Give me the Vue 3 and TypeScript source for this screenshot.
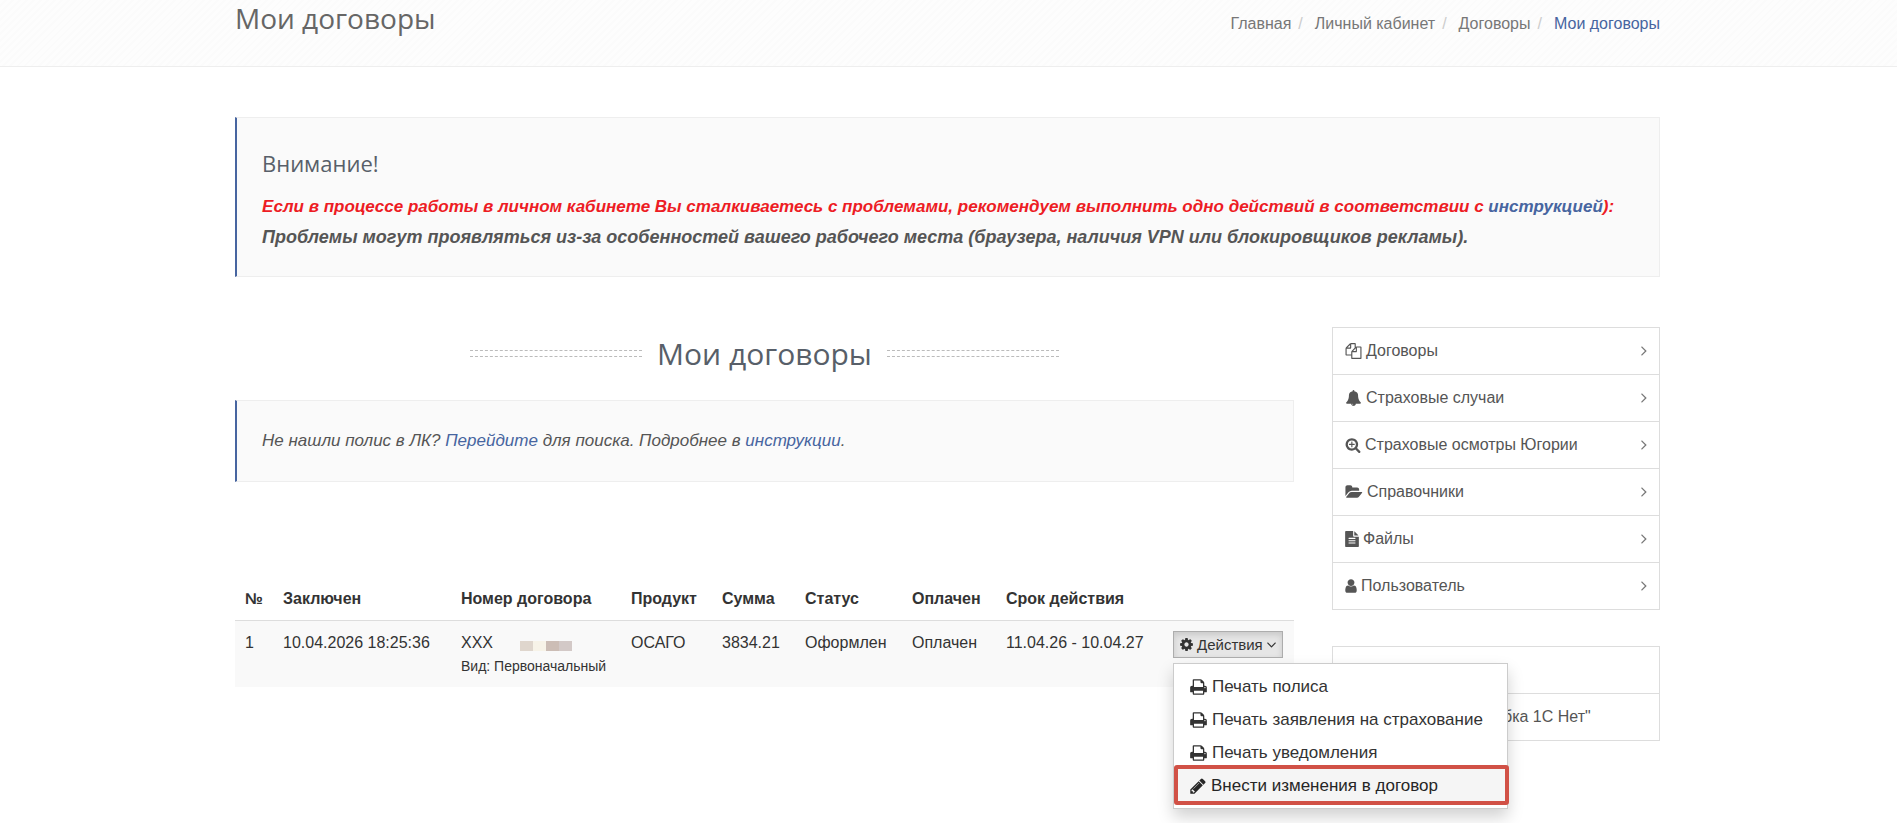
<script setup lang="ts">
import { ref } from 'vue'

interface Icon {
  box: string
  width: number
  path: string
}

const icons: Record<string, Icon> = {
  files: {
    box: '0 0 1792 1792',
    width: 17,
    path: 'M1696 384q40 0 68 28t28 68v1216q0 40-28 68t-68 28h-960q-40 0-68-28t-28-68v-288h-544q-40 0-68-28t-28-68v-672q0-40 20-88t48-76l408-408q28-28 76-48t88-20h416q40 0 68 28t28 68v328q68-40 128-40h416zm-544 213l-299 299h299v-299zm-640-384l-299 299h299v-299zm196 647l316-316v-416h-384v416q0 40-28 68t-68 28h-416v640h512v-256q0-40 20-88t48-76zm956 804v-1152h-384v416q0 40-28 68t-68 28h-416v640h896z',
  },
  bell: {
    box: '0 0 1792 1792',
    width: 17,
    path: 'M912 1696q0-16-16-16-59 0-101.5-42.5t-42.5-101.5q0-16-16-16t-16 16q0 73 51.5 124.5t124.5 51.5q16 0 16-16zm816-288q0 52-38 90t-90 38h-448q0 106-75 181t-181 75-181-75-75-181h-448q-52 0-90-38t-38-90q50-42 91-88t85-119.5 74.5-158.5 50-206 19.5-260q0-152 117-282.5t307-158.5q-8-19-8-39 0-40 28-68t68-28 68 28 28 68q0 20-8 39 190 28 307 158.5t117 282.5q0 139 19.5 260t50 206 74.5 158.5 85 119.5 91 88z',
  },
  searchPlus: {
    box: '64 0 1664 1792',
    width: 16,
    path: 'M1088 800v64q0 13-9.5 22.5t-22.5 9.5h-224v224q0 13-9.5 22.5t-22.5 9.5h-64q-13 0-22.5-9.5t-9.5-22.5v-224h-224q-13 0-22.5-9.5t-9.5-22.5v-64q0-13 9.5-22.5t22.5-9.5h224v-224q0-13 9.5-22.5t22.5-9.5h64q13 0 22.5 9.5t9.5 22.5v224h224q13 0 22.5 9.5t9.5 22.5zm128 32q0-185-131.5-316.5t-316.5-131.5-316.5 131.5-131.5 316.5 131.5 316.5 316.5 131.5 316.5-131.5 131.5-316.5zm512 832q0 53-37.5 90.5t-90.5 37.5q-54 0-90-38l-343-342q-179 124-399 124-143 0-273.5-55.5t-225-150-150-225-55.5-273.5 55.5-273.5 150-225 225-150 273.5-55.5 273.5 55.5 225 150 150 225 55.5 273.5q0 220-124 399l343 343q37 37 37 90z',
  },
  folder: {
    box: '0 0 1920 1792',
    width: 18,
    path: 'M1879 952q0 31-31 66l-336 396q-43 51-120.5 86.5t-143.5 35.5h-1088q-34 0-60.5-13t-26.5-43q0-31 31-66l336-396q43-51 120.5-86.5t143.5-35.5h1088q34 0 60.5 13t26.5 43zm-343-344v160h-832q-94 0-197 47.5t-164 119.5l-337 396-5 6q0-4-.5-12.5t-.5-12.5v-960q0-92 66-158t158-66h320q92 0 158 66t66 158v32h544q92 0 158 66t66 158z',
  },
  fileText: {
    box: '128 0 1536 1792',
    width: 14,
    path: 'M1596 476q14 14 28 36h-472v-472q22 14 36 28zm-476 164h544v1056q0 40-28 68t-68 28h-1344q-40 0-68-28t-28-68v-1600q0-40 28-68t68-28h800v544q0 40 28 68t68 28zm160 736v-64q0-14-9-23t-23-9h-704q-14 0-23 9t-9 23v64q0 14 9 23t23 9h704q14 0 23-9t9-23zm0-256v-64q0-14-9-23t-23-9h-704q-14 0-23 9t-9 23v64q0 14 9 23t23 9h704q14 0 23-9t9-23zm0-256v-64q0-14-9-23t-23-9h-704q-14 0-23 9t-9 23v64q0 14 9 23t23 9h704q14 0 23-9t9-23z',
  },
  user: {
    box: '256 0 1280 1792',
    width: 12,
    path: 'M1536 1399q0 109-62.5 187t-150.5 78h-854q-88 0-150.5-78t-62.5-187q0-85 8.5-160.5t31.5-152 58.5-131 94-89 134.5-34.5q131 128 313 128t313-128q76 0 134.5 34.5t94 89 58.5 131 31.5 152 8.5 160.5zm-256-887q0 159-112.5 271.5t-271.5 112.5-271.5-112.5-112.5-271.5 112.5-271.5 271.5-112.5 271.5 112.5 112.5 271.5z',
  },
  print: {
    box: '64 0 1664 1792',
    width: 17,
    path: 'M448 1536h896v-256h-896v256zm0-640h896v-384h-160q-40 0-68-28t-28-68v-160h-640v640zm1152 64q0-26-19-45t-45-19-45 19-19 45 19 45 45 19 45-19 19-45zm128 0v416q0 13-9.5 22.5t-22.5 9.5h-224v160q0 40-28 68t-68 28h-960q-40 0-68-28t-28-68v-160h-224q-13 0-22.5-9.5t-9.5-22.5v-416q0-79 56.5-135.5t135.5-56.5h64v-544q0-40 28-68t68-28h672q40 0 88 20t76 48l152 152q28 28 48 76t20 88v256h64q79 0 135.5 56.5t56.5 135.5z',
  },
  pencil: {
    box: '128 0 1536 1792',
    width: 16,
    path: 'M491 1536l91-91-235-235-91 91v107h128v128h107zm523-928q0-22-22-22-10 0-17 7l-542 542q-7 7-7 17 0 22 22 22 10 0 17-7l542-542q7-7 7-17zm-54-192l416 416-832 832h-416v-416zm683 96q0 53-37 90l-166 166-416-416 166-165q36-38 90-38 53 0 91 38l235 234q37 39 37 91z',
  },
}

const crumbs = ['Главная', 'Личный кабинет', 'Договоры', 'Мои договоры']

const sections = [
  { label: 'Договоры', icon: icons.files },
  { label: 'Страховые случаи', icon: icons.bell },
  { label: 'Страховые осмотры Югории', icon: icons.searchPlus },
  { label: 'Справочники', icon: icons.folder },
  { label: 'Файлы', icon: icons.fileText },
  { label: 'Пользователь', icon: icons.user },
]

const columns = ['№', 'Заключен', 'Номер договора', 'Продукт', 'Сумма', 'Статус', 'Оплачен', 'Срок действия', '']

const actions = [
  { label: 'Печать полиса', icon: icons.print, marked: false },
  { label: 'Печать заявления на страхование', icon: icons.print, marked: false },
  { label: 'Печать уведомления', icon: icons.print, marked: false },
  { label: 'Внести изменения в договор', icon: icons.pencil, marked: true },
]

const menuOpen = ref(true)
</script>

<template>
  <div class="page">
    <header class="topbar">
      <div class="container topbar-row">
        <h1>Мои договоры</h1>
        <nav aria-label="Навигация">
          <ol class="crumbs">
            <li v-for="(crumb, i) in crumbs" :key="i">
              <a href="#" :class="{ current: i === crumbs.length - 1 }">{{ crumb }}</a>
            </li>
          </ol>
        </nav>
      </div>
    </header>

    <div class="container">
      <section class="notice warning">
        <h2>Внимание!</h2>
        <p class="red">
          Если в процессе работы в личном кабинете Вы сталкиваетесь с проблемами, рекомендуем выполнить одно действий в соответствии с
          <a href="#">инструкцией</a>):
        </p>
        <p class="reason">Проблемы могут проявляться из-за особенностей вашего рабочего места (браузера, наличия VPN или блокировщиков рекламы).</p>
      </section>

      <div class="layout">
        <main>
          <div class="headline">
            <span class="rule"></span>
            <h2>Мои договоры</h2>
            <span class="rule"></span>
          </div>
          <section class="notice search">
            <p>Не нашли полис в ЛК? <a href="#">Перейдите</a> для поиска. Подробнее в <a href="#">инструкции</a>.</p>
          </section>

          <table>
            <thead>
              <tr>
                <th v-for="(column, i) in columns" :key="i" scope="col">{{ column }}</th>
              </tr>
            </thead>
            <tbody>
              <tr>
                <td>1</td>
                <td>10.04.2026 18:25:36</td>
                <td>
                  <div class="number">
                    XXX
                    <span class="masked"><i></i><i></i><i></i><i></i></span>
                  </div>
                  <div class="kind">Вид: Первоначальный</div>
                </td>
                <td>ОСАГО</td>
                <td>3834.21</td>
                <td>Оформлен</td>
                <td>Оплачен</td>
                <td>11.04.26 - 10.04.27</td>
                <td>
                  <div class="dropdown">
                    <button type="button" class="toggle" :aria-expanded="menuOpen" @click="menuOpen = !menuOpen">
                      <svg class="cog" viewBox="128 0 1536 1792" aria-hidden="true">
                        <path d="M1152 896q0-106-75-181t-181-75-181 75-75 181 75 181 181 75 181-75 75-181zm512-109v222q0 12-8 23t-20 13l-185 28q-19 54-39 91 35 50 107 138 10 12 10 25t-9 23q-27 37-99 108t-94 71q-12 0-26-9l-138-108q-44 23-91 38-16 136-29 186-7 28-36 28h-222q-14 0-24.5-8.5t-11.5-21.5l-28-184q-49-16-90-37l-141 107q-10 9-25 9-14 0-25-11-126-114-165-168-7-10-7-23 0-12 8-23 15-21 51-66.5t54-70.5q-27-50-41-99l-183-27q-13-2-21-12.5t-8-23.5v-222q0-12 8-23t19-13l186-28q14-46 39-92-40-57-107-138-10-12-10-24 0-10 9-23 26-36 98.5-107.5t94.5-71.5q13 0 26 10l138 107q44-23 91-38 16-136 29-186 7-28 36-28h222q14 0 24.5 8.5t11.5 21.5l28 184q49 16 90 37l142-107q9-9 24-9 13 0 25 10 129 119 165 170 7 8 7 22 0 12-8 23-15 21-51 66.5t-54 70.5q26 50 41 98l183 28q13 2 21 12.5t8 23.5z" />
                      </svg>
                      Действия
                      <svg class="caret" viewBox="384 384 1024 1024" aria-hidden="true">
                        <path d="M1395 736q0 13-10 23l-466 466q-10 10-23 10t-23-10l-466-466q-10-10-10-23t10-23l50-50q10-10 23-10t23 10l393 393 393-393q10-10 23-10t23 10l50 50q10 10 10 23z" />
                      </svg>
                    </button>
                    <ul v-if="menuOpen" class="menu">
                      <li v-for="action in actions" :key="action.label" :class="{ marked: action.marked }">
                        <a href="#">
                          <svg :viewBox="action.icon.box" :width="action.icon.width" height="18" aria-hidden="true">
                            <path :d="action.icon.path" />
                          </svg>
                          {{ action.label }}
                        </a>
                      </li>
                    </ul>
                  </div>
                </td>
              </tr>
            </tbody>
          </table>
        </main>

        <aside>
          <ul class="side">
            <li v-for="section in sections" :key="section.label">
              <a href="#">
                <svg :viewBox="section.icon.box" :width="section.icon.width" height="16" aria-hidden="true">
                  <path :d="section.icon.path" />
                </svg>
                {{ section.label }}
                <svg class="arrow" viewBox="576 384 640 1024" aria-hidden="true">
                  <path d="M1171 896q0 13-10 23l-466 466q-10 10-23 10t-23-10l-50-50q-10-10-10-23t10-23l393-393-393-393q-10-10-10-23t10-23l50-50q10-10 23-10t23 10l466 466q10 10 10 23z" />
                </svg>
              </a>
            </li>
          </ul>
          <ul class="side status">
            <li></li>
            <li>бка 1С Нет"</li>
          </ul>
        </aside>
      </div>
    </div>
  </div>
</template>

<style>
body {
  margin: 0;
  background: #fff;
}
</style>

<style scoped>
.page {
  min-height: 100vh;
  color: #555;
  font: 16px/26px "Liberation Sans", Arial, sans-serif;
}

.container {
  box-sizing: border-box;
  max-width: 1455px;
  margin: 0 auto;
  padding: 0 16px 0 14px;
}

h1,
h2,
p,
ul,
ol {
  margin: 0;
  padding: 0;
  list-style: none;
}

h1,
h2 {
  font-family: "Open Sans", sans-serif;
  font-weight: 400;
  color: #585f69;
}

a {
  color: #4765a0;
  text-decoration: none;
}

svg {
  flex: none;
  fill: currentColor;
}

.topbar {
  border-bottom: 1px solid #eee;
  background: repeating-linear-gradient(135deg, #fdfdfd 0 3px, #fbfbfb 3px 5px);
}

.topbar-row {
  display: flex;
  justify-content: space-between;
  padding-bottom: 29px;
}

h1 {
  color: #666;
  font-size: 28px;
  line-height: 36px;
}

.crumbs {
  display: flex;
  padding-top: 11px;
}

.crumbs li + li::before {
  content: "/";
  padding: 0 12px 0 7px;
  color: #ccc;
}

.crumbs a {
  color: #777;
}

.crumbs .current {
  color: #4765a0;
}

.notice {
  padding: 24px 25px;
  border: 1px solid #eee;
  border-left: 2px solid #4765a0;
  background: #fafafa;
  font-size: 17px;
  font-style: italic;
}

.warning {
  margin-top: 50px;
  font-weight: 700;
}

.warning h2 {
  margin-bottom: 8px;
  font-size: 22px;
  font-style: normal;
  line-height: 42px;
}

.warning p {
  line-height: 30px;
}

.warning .red {
  color: #ed1c24;
}

.warning .reason {
  font-size: 18px;
}

.layout {
  display: grid;
  grid-template-columns: minmax(0, 1fr) 328px;
  gap: 38px;
  margin-top: 50px;
}

.headline {
  display: flex;
  align-items: center;
  justify-content: center;
  gap: 15px;
  padding-bottom: 20px;
}

.headline h2 {
  font-size: 30px;
  line-height: 53px;
}

.rule {
  width: 172px;
  height: 5px;
  border-top: 1px dashed #bbb;
  border-bottom: 1px dashed #bbb;
}

.search {
  padding: 27px 25px;
}

table {
  width: 100%;
  margin-top: 94px;
  border-collapse: collapse;
  table-layout: fixed;
  color: #333;
}

th,
td {
  box-sizing: border-box;
  padding: 10px;
  text-align: left;
  vertical-align: top;
  white-space: nowrap;
}

th {
  padding-bottom: 8px;
  border-bottom: 1px solid #ddd;
}

td {
  padding: 9px 10px;
  background: #f9f9f9;
}

th:nth-child(1) { width: 38px; }
th:nth-child(2) { width: 178px; }
th:nth-child(3) { width: 170px; }
th:nth-child(4) { width: 91px; }
th:nth-child(5) { width: 83px; }
th:nth-child(6) { width: 107px; }
th:nth-child(7) { width: 94px; }
th:nth-child(8) { width: 167px; }

.number {
  display: flex;
  align-items: center;
  gap: 27px;
}

.masked {
  display: flex;
  margin-top: 5px;
}

.masked i {
  width: 13px;
  height: 10px;
  background: #dfd6cd;
}

.masked i:nth-child(2) { background: #f7f3e8; }
.masked i:nth-child(3) { background: #ccbdb5; }
.masked i:nth-child(4) { background: #d3c9c7; }

.kind {
  padding-bottom: 2px;
  font-size: 14px;
  line-height: 20px;
}

.dropdown {
  position: relative;
}

.toggle {
  display: flex;
  align-items: center;
  gap: 4px;
  margin-top: 1px;
  padding: 0 6px;
  border: 1px solid #adadad;
  background: #e6e6e6;
  box-shadow: inset 0 3px 6px rgba(0, 0, 0, 0.13);
  color: #333;
  font: 15px/25px "Liberation Sans", Arial, sans-serif;
}

.cog {
  width: 13px;
  height: 15px;
}

.caret {
  width: 9px;
  height: 9px;
}

.menu {
  position: absolute;
  z-index: 1;
  top: 100%;
  left: 0;
  min-width: 333px;
  margin-top: 5px;
  padding: 6px 0;
  border: 1px solid #ccc;
  background: #fff;
  box-shadow: 0 8px 15px rgba(0, 0, 0, 0.18);
}

.menu li {
  position: relative;
}

.menu a {
  display: flex;
  align-items: center;
  gap: 5px;
  padding: 0 16px;
  color: #333;
  font-size: 17px;
  line-height: 33px;
}

.menu .marked a {
  background: #f5f5f5;
  color: #262626;
}

.menu .marked::after {
  content: "";
  position: absolute;
  inset: -4px -2px -3px 0;
  border: 4px solid #d15146;
  border-radius: 3px;
  pointer-events: none;
}

.side {
  border: 1px solid #ddd;
}

.side li {
  min-height: 46px;
}

.side li + li {
  border-top: 1px solid #ddd;
}

.side a {
  display: flex;
  align-items: center;
  gap: 4px;
  padding: 10px 12px;
  color: #555;
}

.arrow {
  width: 6px;
  height: 10px;
  margin-left: auto;
  color: #777;
}

.status {
  margin-top: 36px;
  line-height: 46px;
}

.status li {
  padding-left: 170px;
}
</style>
